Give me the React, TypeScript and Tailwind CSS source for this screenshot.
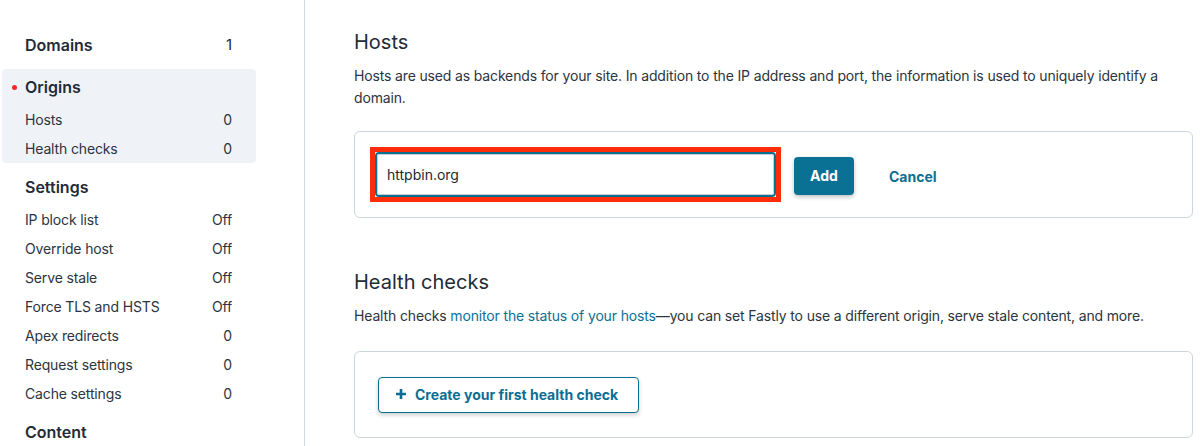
import React from "react";

type Item = { label: string; value: string };

const SideItem = ({ label, value }: Item) => (
  <div className="flex h-[29px] items-center justify-between pl-[23px] pr-[24px] text-[14px] tracking-[-0.15px] text-[#2b3440]">
    <span>{label}</span>
    <span>{value}</span>
  </div>
);

const SideHeading = ({ label, value, dot }: { label: string; value?: string; dot?: boolean }) => (
  <div className="relative flex h-[36px] items-center justify-between pl-[23px] pr-[24px] text-[16px] font-semibold text-[#232b36]">
    {dot && <span className="absolute left-[10px] top-[16px] h-[5px] w-[5px] rounded-full bg-[#f4262b]" />}
    <span>{label}</span>
    {value && <span className="font-normal text-[15px]">{value}</span>}
  </div>
);

export default function App() {
  const settings: Item[] = [
    { label: "IP block list", value: "Off" },
    { label: "Override host", value: "Off" },
    { label: "Serve stale", value: "Off" },
    { label: "Force TLS and HSTS", value: "Off" },
    { label: "Apex redirects", value: "0" },
    { label: "Request settings", value: "0" },
    { label: "Cache settings", value: "0" },
  ];
  return (
    <div
      className="flex h-[446px] w-full overflow-hidden bg-white"
      style={{ fontFamily: "Inter, 'Noto Sans', sans-serif" }}
    >
      <aside className="w-[305px] shrink-0 border-r border-[#cfd7df]">
        <div className="flex w-[256px] flex-col gap-[6px] pl-[2px] pt-[27px]">
          <SideHeading label="Domains" value="1" />
          <div className="rounded-[4px] bg-[#eff3f7]">
            <SideHeading label="Origins" dot />
            <SideItem label="Hosts" value="0" />
            <SideItem label="Health checks" value="0" />
          </div>
          <div>
            <SideHeading label="Settings" />
            {settings.map((s) => (
              <SideItem key={s.label} {...s} />
            ))}
          </div>
          <SideHeading label="Content" />
        </div>
      </aside>
      <main className="flex-1 pl-[49px] pr-[11px] pt-[29px] text-[#2b3440]">
        <h2 className="text-[20px] leading-[26px] text-[#232b36]">Hosts</h2>
        <p className="mt-[10px] text-[14px] leading-[22px] tracking-[-0.15px]">
          Hosts are used as backends for your site. In addition to the IP address and port, the information is used to uniquely identify a domain.
        </p>
        <div className="mt-[22px] flex h-[87px] items-center rounded-[6px] border border-[#cdd5dc] px-[15px]">
          <div className="border-[5px] border-[#ff2d0a]">
            <div className="rounded-[4px] border-2 border-[#0b6f92]">
              <div className="flex h-[41px] w-[397px] items-center rounded-[3px] border border-[#c9d1d8] pl-[9px] text-[14px] text-[#1f2731]">
                httpbin.org
              </div>
            </div>
          </div>
          <button className="ml-[13px] mt-[2px] h-[38px] w-[60px] rounded-[4px] bg-[#0b7194] text-[14px] font-bold text-white shadow-[0_2px_4px_rgba(0,0,0,0.25)]">
            Add
          </button>
          <button className="ml-[19px] mt-[3px] h-[38px] rounded-[4px] px-[16px] text-[14px] font-bold text-[#0b6e92]">
            Cancel
          </button>
        </div>

        <h2 className="mt-[51px] text-[20px] leading-[26px] text-[#232b36]">Health checks</h2>
        <p className="mt-[10px] text-[14px] leading-[22px] tracking-[-0.15px]">
          Health checks <span className="text-[#0b7194]">monitor the status of your hosts</span>—you can set Fastly to use a different origin, serve stale content, and more.
        </p>
        <div className="mt-[24px] flex h-[87px] items-center rounded-[6px] border border-[#cdd5dc] px-[23px]">
          <button className="flex h-[36px] w-[261px] items-center gap-[8px] rounded-[4px] border border-[#0b6f92] bg-white pl-[16px] text-[14px] font-bold text-[#0b6e92] shadow-[0_2px_4px_rgba(0,0,0,0.2)]">
            <svg width="12" height="12" viewBox="0 0 12 12" className="mb-[2px]">
              <path d="M6 1v10M1 6h10" stroke="#0b6e92" strokeWidth="2.6" strokeLinecap="butt" />
            </svg>
            <span>Create your first health check</span>
          </button>
        </div>
      </main>
    </div>
  );
}
